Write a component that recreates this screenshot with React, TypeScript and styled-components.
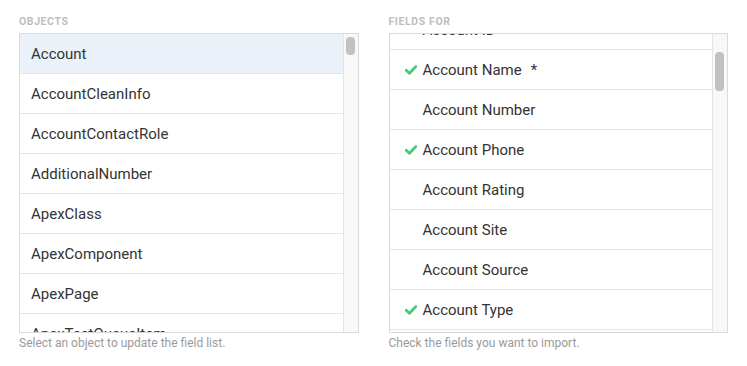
import React from 'react';
import styled, {createGlobalStyle} from "styled-components";

const GlobalStyle = createGlobalStyle`
    body {
        margin: 0;
        background: #ffffff;
        font-family: Roboto, 'Liberation Sans', sans-serif;
    }
`

type FieldItem = {
    name: string
    checked?: boolean
    required?: boolean
}

const objects = [
    'Account',
    'AccountCleanInfo',
    'AccountContactRole',
    'AdditionalNumber',
    'ApexClass',
    'ApexComponent',
    'ApexPage',
    'ApexTestQueueItem',
]

const fields: FieldItem[] = [
    {name: 'Account ID'},
    {name: 'Account Name', checked: true, required: true},
    {name: 'Account Number'},
    {name: 'Account Phone', checked: true},
    {name: 'Account Rating'},
    {name: 'Account Site'},
    {name: 'Account Source'},
    {name: 'Account Type', checked: true},
    {name: 'Annual Revenue'},
]

const Check = () => (
    <CheckIcon viewBox="0 0 12 10" width="12" height="10">
        <path d="M1.2 5.2 L4.4 8.2 L10.8 1.6" fill="none" stroke="#3ccf75" strokeWidth="2.8" strokeLinecap="round"
              strokeLinejoin="round"/>
    </CheckIcon>
)

type ScrollProps = {
    offset: number
    size: number
}

const ScrollBar = (props: ScrollProps) => (
    <Track>
        <Thumb $offset={props.offset} $size={props.size}/>
    </Track>
)

export default function App() {
    return (
        <Page>
            <GlobalStyle/>
            <Column>
                <Label>Objects</Label>
                <Box>
                    <Viewport>
                        <List>
                            {objects.map((o, i) => (
                                <ObjectRow key={o} $selected={i === 0}>{o}</ObjectRow>
                            ))}
                        </List>
                    </Viewport>
                    <ScrollBar offset={3} size={18}/>
                </Box>
                <Hint>Select an object to update the field list.</Hint>
            </Column>
            <Column>
                <Label>Fields for</Label>
                <Box>
                    <Viewport>
                        <List $shift={-24}>
                            {fields.map(f => (
                                <FieldRow key={f.name}>
                                    <CheckSlot>{f.checked && <Check/>}</CheckSlot>
                                    <span>{f.name}</span>
                                    {f.required && <Star>*</Star>}
                                </FieldRow>
                            ))}
                        </List>
                    </Viewport>
                    <ScrollBar offset={18} size={39}/>
                </Box>
                <Hint>Check the fields you want to import.</Hint>
            </Column>
        </Page>
    );
}

const Page = styled.div`
    display: flex;
    gap: 30px;
    padding: 15px 19px;
`
const Column = styled.div`
    width: 340px;
    display: flex;
    flex-direction: column;
`
const Label = styled.div`
    font-size: 10.5px;
    font-weight: 700;
    color: #bdbdbd;
    text-transform: uppercase;
    letter-spacing: 0.6px;
    line-height: 14px;
    margin-bottom: 4px;
`
const Box = styled.div`
    height: 300px;
    box-sizing: border-box;
    border: 1px solid #dadada;
    display: flex;
    background: #fff;
`
const Viewport = styled.div`
    flex: 1;
    overflow: hidden;
`
const List = styled.div<{ $shift?: number }>`
    display: flex;
    flex-direction: column;
    margin-top: ${p => p.$shift ?? 0}px;
`
const Row = styled.div`
    height: 40px;
    flex-shrink: 0;
    box-sizing: border-box;
    border-bottom: 1px solid #e6e6e6;
    display: flex;
    align-items: center;
    font-size: 15px;
    color: #333333;
`
const ObjectRow = styled(Row)<{ $selected?: boolean }>`
    padding-left: 11px;
    background: ${p => p.$selected ? '#eaf1f8' : '#ffffff'};
`
const FieldRow = styled(Row)`
    padding-left: 15px;
`
const CheckSlot = styled.span`
    width: 13px;
    margin-right: 5px;
    display: flex;
    align-items: center;
`
const CheckIcon = styled.svg`
    display: block;
`
const Star = styled.span`
    margin-left: 9px;
`
const Track = styled.div`
    width: 15px;
    box-sizing: border-box;
    border-left: 1px solid #e4e4e4;
    background: #f8f8f8;
    padding: 0 3px 0 2px;
`
const Thumb = styled.div<{ $offset: number, $size: number }>`
    margin-top: ${p => p.$offset}px;
    height: ${p => p.$size}px;
    border-radius: 4px;
    background: #c1c1c1;
`
const Hint = styled.div`
    margin-top: 2px;
    font-size: 12px;
    color: #9a9a9a;
    line-height: 16px;
`
